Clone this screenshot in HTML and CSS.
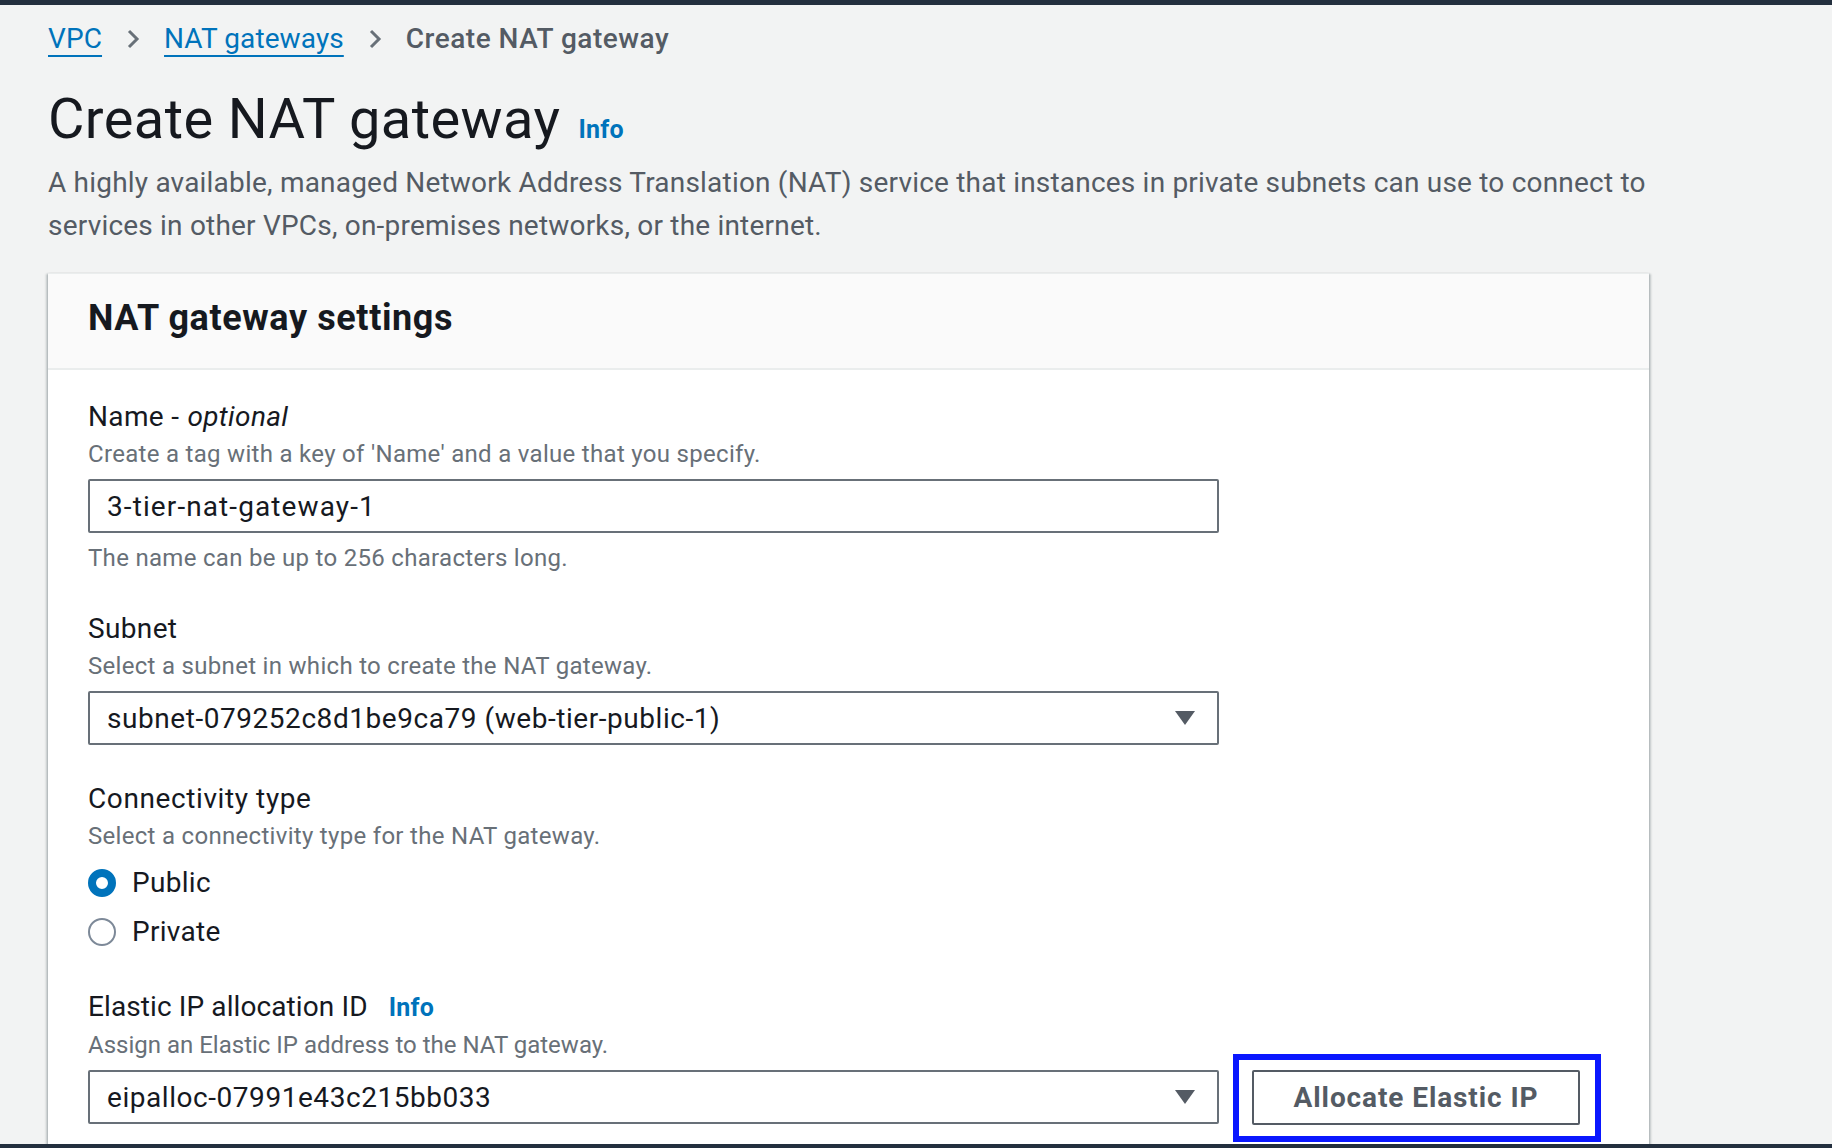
FILE: index.html
```html
<!DOCTYPE html>
<html lang="en">
<head>
<meta charset="utf-8">
<title>Create NAT gateway</title>
<link rel="stylesheet" href="styles.css">
</head>
<body>
<div class="topbar"></div>
<main class="main">
  <nav class="breadcrumbs">
    <a class="crumb-link" href="#">VPC</a>
    <svg class="chev" width="16" height="20" viewBox="0 0 16 20"><path d="M4 2 L12 10 L4 18" fill="none" stroke="#687078" stroke-width="3"/></svg>
    <a class="crumb-link" href="#">NAT gateways</a>
    <svg class="chev" width="16" height="20" viewBox="0 0 16 20"><path d="M4 2 L12 10 L4 18" fill="none" stroke="#687078" stroke-width="3"/></svg>
    <span class="crumb-current">Create NAT gateway</span>
  </nav>

  <div class="title-row">
    <h1 class="page-title">Create NAT gateway</h1>
    <a class="info-link" href="#">Info</a>
  </div>
  <p class="page-desc">A highly available, managed Network Address Translation (NAT) service that instances in private subnets can use to connect to<br>services in other VPCs, on-premises networks, or the internet.</p>

  <section class="card">
    <div class="card-header">
      <h2 class="card-title">NAT gateway settings</h2>
    </div>
    <div class="card-body">
      <div class="field">
        <div class="label">Name - <i>optional</i></div>
        <div class="desc">Create a tag with a key of 'Name' and a value that you specify.</div>
        <div class="control input">3-tier-nat-gateway-1</div>
        <div class="desc constraint">The name can be up to 256 characters long.</div>
      </div>

      <div class="field">
        <div class="label">Subnet</div>
        <div class="desc">Select a subnet in which to create the NAT gateway.</div>
        <div class="control select">
          <span>subnet-079252c8d1be9ca79 (web-tier-public-1)</span>
          <svg class="caret" width="20" height="16" viewBox="0 0 20 16"><polygon points="0,1 20,1 10,15" fill="#545b64"/></svg>
        </div>
      </div>

      <div class="field">
        <div class="label label-wide">Connectivity type</div>
        <div class="desc">Select a connectivity type for the NAT gateway.</div>
        <div class="radios">
          <div class="radio-row"><span class="radio radio-on"></span><span>Public</span></div>
          <div class="radio-row"><span class="radio"></span><span>Private</span></div>
        </div>
      </div>

      <div class="field">
        <div class="label label-tight">Elastic IP allocation ID <a class="info-link info-inline" href="#">Info</a></div>
        <div class="desc desc-tight">Assign an Elastic IP address to the NAT gateway.</div>
        <div class="control-row">
          <div class="control select">
            <span>eipalloc-07991e43c215bb033</span>
            <svg class="caret" width="20" height="16" viewBox="0 0 20 16"><polygon points="0,1 20,1 10,15" fill="#545b64"/></svg>
          </div>
          <div class="highlight">
            <button class="btn" type="button">Allocate Elastic IP</button>
          </div>
        </div>
      </div>
    </div>
  </section>
</main>
<div class="bottombar"></div>
</body>
</html>
```
FILE: styles.css
```css
* { box-sizing: border-box; }

html, body {
  margin: 0;
  padding: 0;
}

body {
  height: 1148px;
  overflow: hidden;
  display: flex;
  flex-direction: column;
  background: #f2f3f3;
  font-family: Roboto, "Noto Sans", "Liberation Sans", sans-serif;
  color: #16191f;
}

.topbar {
  height: 5px;
  background: #232f3e;
  flex: none;
}

.bottombar {
  height: 4px;
  background: #232f3e;
  flex: none;
}

.main {
  flex: 1;
  overflow: hidden;
  padding: 12px 0 0 48px;
}

.breadcrumbs {
  display: flex;
  align-items: center;
  gap: 23px;
  font-size: 28px;
  line-height: 43px;
  height: 43px;
  letter-spacing: 0.1px;
}

.crumb-link {
  color: #0073bb;
  text-decoration: underline;
  text-decoration-thickness: 2px;
  text-underline-offset: 7px;
}

.chev { display: block; }

.crumb-current {
  color: #545b64;
  font-weight: 500;
  letter-spacing: 0.5px;
}

.title-row {
  display: flex;
  align-items: baseline;
  gap: 18px;
  margin-top: 27px;
}

.page-title {
  margin: 0;
  font-size: 56px;
  line-height: 64px;
  font-weight: 400;
  color: #16191f;
  letter-spacing: 0.4px;
}

.info-link {
  color: #0073bb;
  font-weight: 700;
  font-size: 25px;
  text-decoration: none;
  letter-spacing: 0.3px;
}

.page-desc {
  margin: 10px 0 0 0;
  font-size: 28px;
  line-height: 43px;
  color: #545b64;
  letter-spacing: 0.2px;
}

.card {
  margin-top: 26px;
  width: 1601px;
  background: #ffffff;
  border-top: 1px solid #eaeded;
  box-shadow: 0 1px 2px 0 rgba(0, 28, 36, 0.3), 2px 1px 2px 0 rgba(0, 28, 36, 0.18), -2px 1px 2px 0 rgba(0, 28, 36, 0.18);
}

.card-header {
  background: #fafafa;
  padding: 21px 40px 26px 40px;
  border-bottom: 2px solid #eaeded;
}

.card-title {
  margin: 0;
  font-size: 36px;
  line-height: 47px;
  font-weight: 700;
  color: #16191f;
  letter-spacing: 0.6px;
}

.card-body {
  padding: 27px 40px 40px 40px;
  display: flex;
  flex-direction: column;
  gap: 34px;
}

.field {
  display: flex;
  flex-direction: column;
}

.label {
  font-size: 28px;
  line-height: 40px;
  color: #16191f;
  display: flex;
  align-items: baseline;
  letter-spacing: 0.35px;
}

.label-wide {
  letter-spacing: 0.6px;
}

.label-tight {
  letter-spacing: 0.1px;
}

.label i {
  font-style: italic;
  margin-left: 8px;
}

.info-inline {
  margin-left: 21px;
  letter-spacing: 0.3px;
}

.desc {
  font-size: 24px;
  line-height: 34px;
  color: #687078;
  letter-spacing: 0.3px;
}

.desc-tight {
  letter-spacing: 0;
}

.constraint {
  margin-top: 8px;
}

.control {
  margin-top: 8px;
  width: 1131px;
  height: 54px;
  border: 2px solid #687078;
  border-radius: 2px;
  background: #ffffff;
  padding: 0 16px 0 17px;
  display: flex;
  align-items: center;
  font-size: 28px;
  color: #16191f;
  letter-spacing: 0.55px;
}

.input {
  letter-spacing: 1.1px;
}

.select {
  justify-content: space-between;
  padding-right: 22px;
}

.caret { display: block; }

.radios {
  margin-top: 8px;
  display: flex;
  flex-direction: column;
  gap: 6px;
}

.radio-row {
  display: flex;
  align-items: center;
  gap: 16px;
  font-size: 28px;
  line-height: 43px;
  color: #16191f;
  letter-spacing: 0.3px;
}

.radio {
  width: 28px;
  height: 28px;
  border-radius: 50%;
  border: 2px solid #7d8998;
  background: #ffffff;
}

.radio-on {
  border: 8px solid #0073bb;
}

.control-row {
  display: flex;
  align-items: flex-start;
  gap: 33px;
}

.highlight {
  position: relative;
  margin-top: 8px;
}

.highlight::after {
  content: "";
  position: absolute;
  top: -16px;
  left: -19px;
  right: -21px;
  bottom: -17px;
  border: 6px solid #0a17ff;
  pointer-events: none;
}

.btn {
  display: block;
  width: 328px;
  height: 55px;
  border: 2px solid #545b64;
  border-radius: 2px;
  background: #ffffff;
  color: #545b64;
  font-family: Roboto, "Noto Sans", "Liberation Sans", sans-serif;
  font-size: 28px;
  font-weight: 700;
  letter-spacing: 0.9px;
  padding: 0;
}
```
